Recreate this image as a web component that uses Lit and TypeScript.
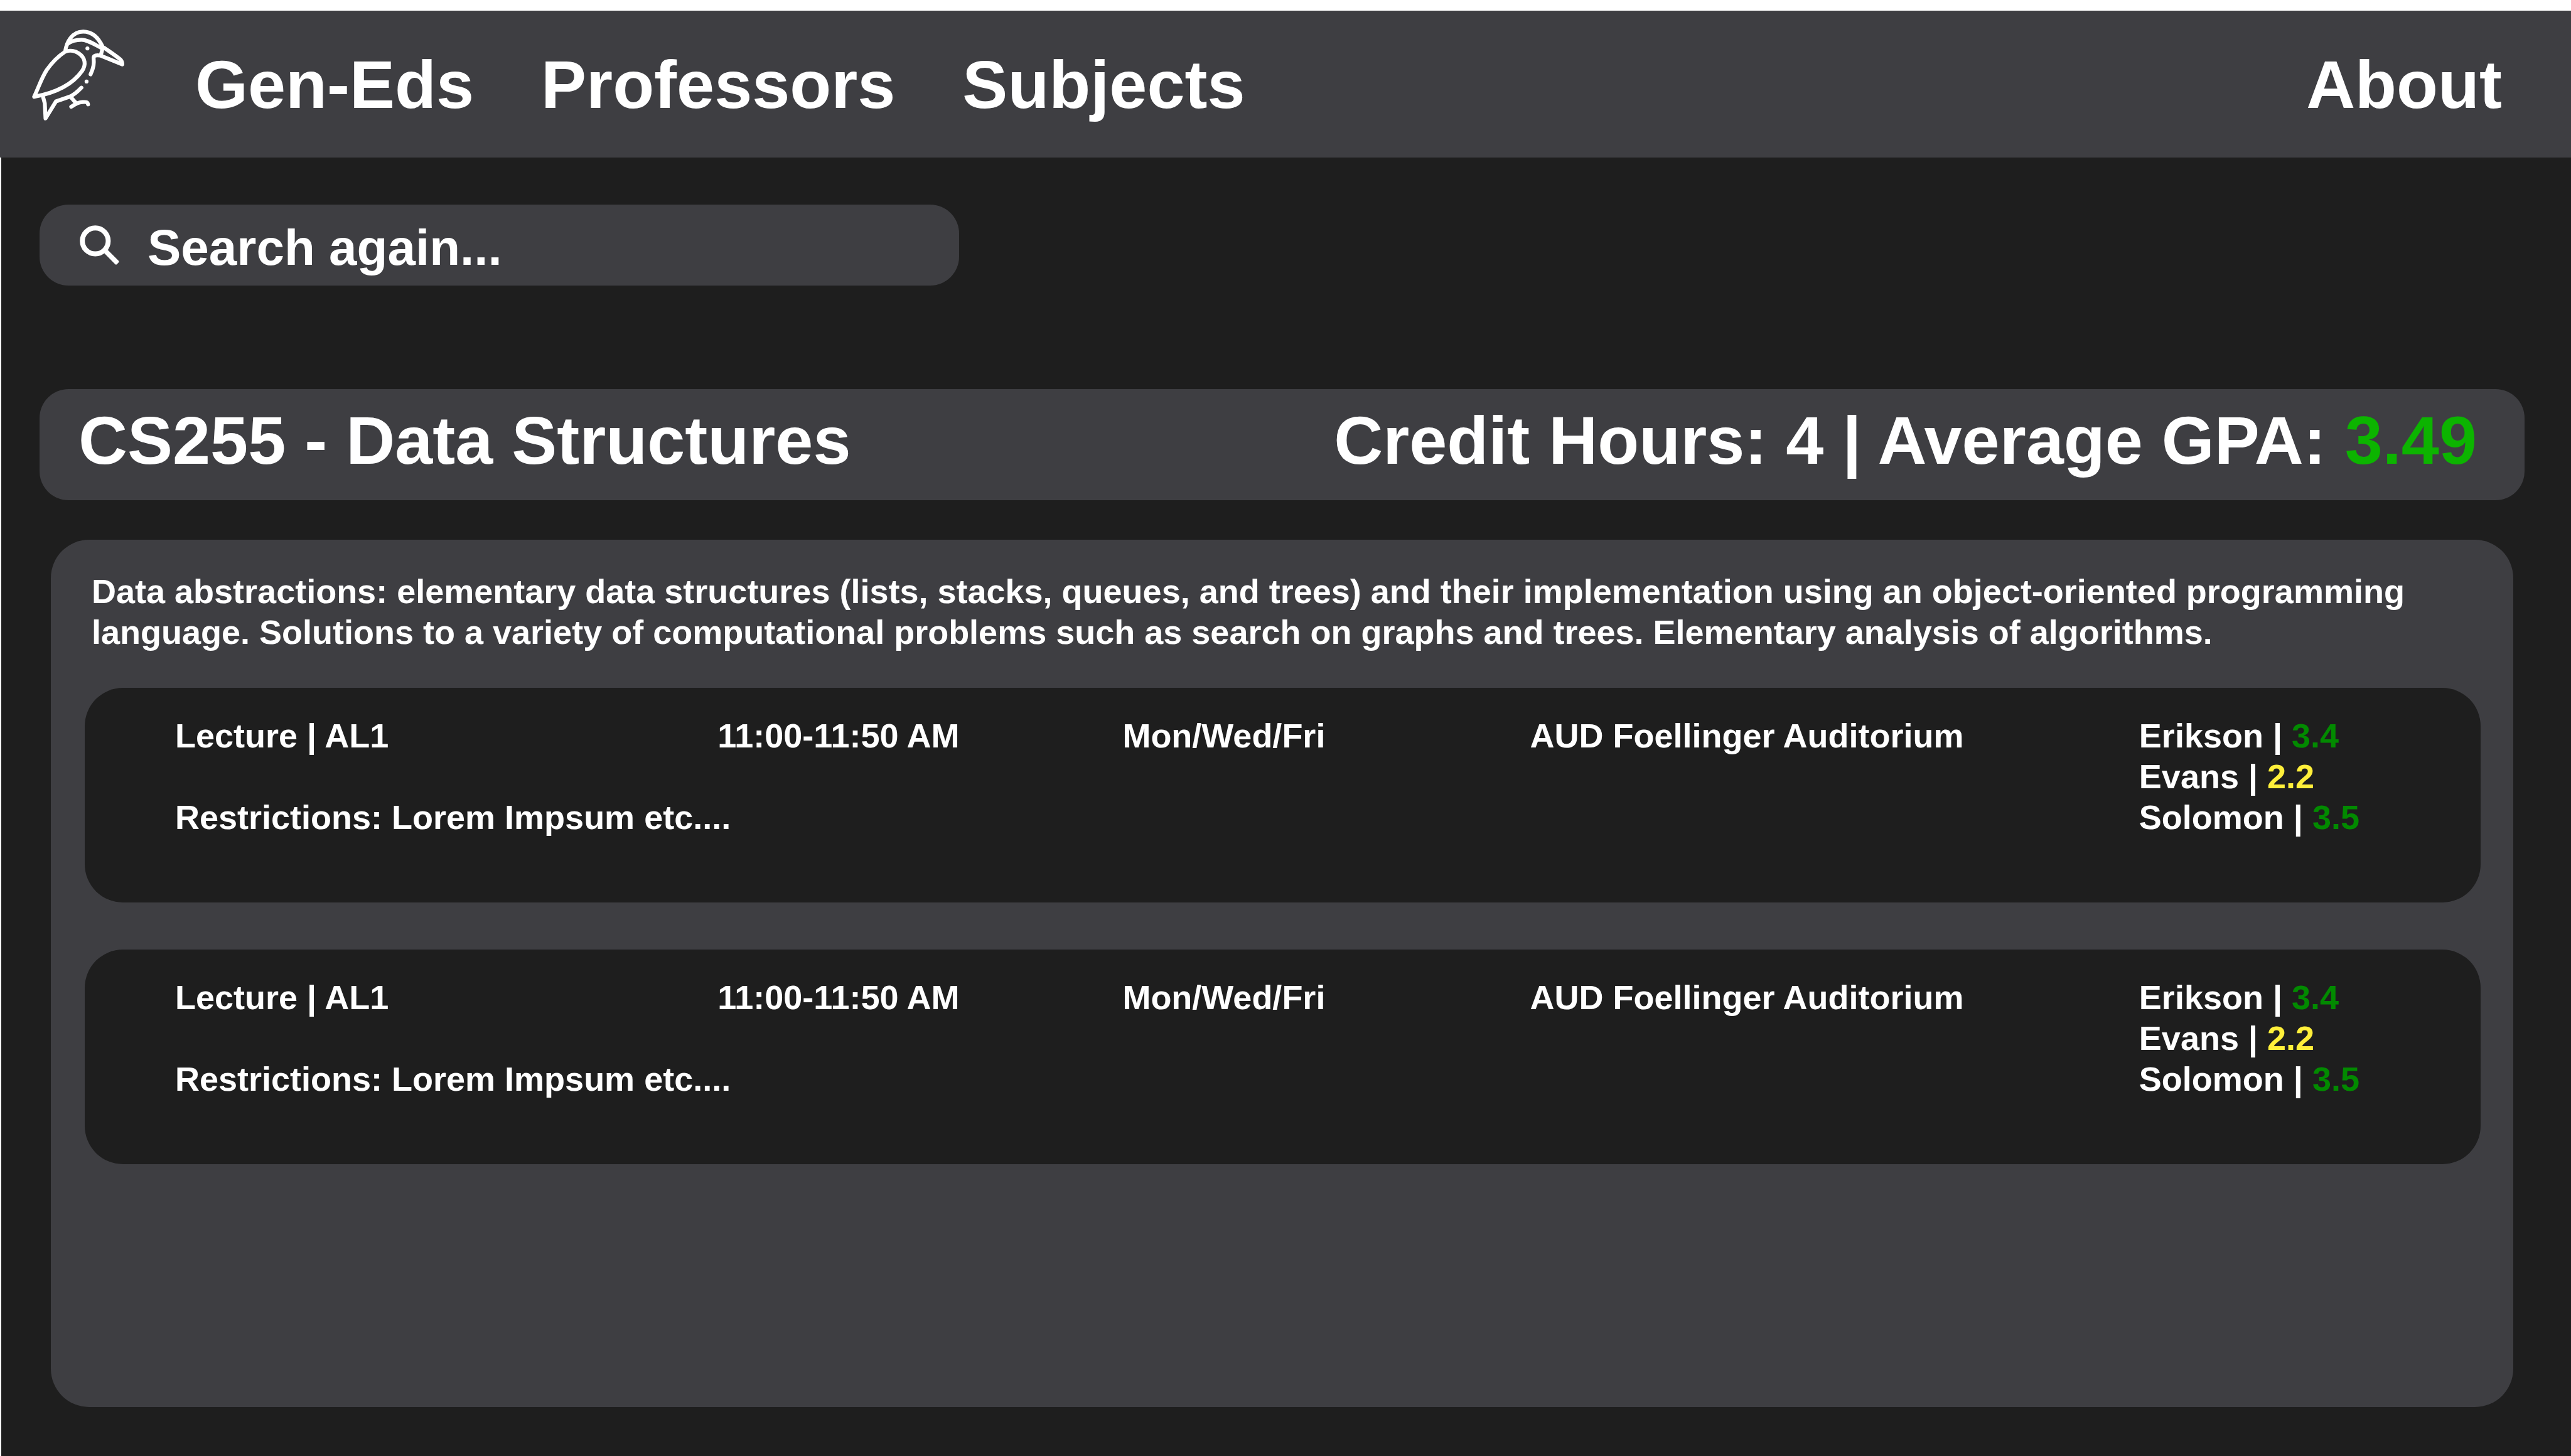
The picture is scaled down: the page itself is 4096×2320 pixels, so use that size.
import { LitElement, html, css, svg } from "lit";
import { customElement, property } from "lit/decorators.js";

type Rating = "high" | "mid";

interface Instructor {
  name: string;
  gpa: string;
  rating: Rating;
}

interface Section {
  kind: string;
  time: string;
  days: string;
  place: string;
  restrictions: string;
  instructors: Instructor[];
}

const lecture: Section = {
  kind: "Lecture | AL1",
  time: "11:00-11:50 AM",
  days: "Mon/Wed/Fri",
  place: "AUD Foellinger Auditorium",
  restrictions: "Restrictions: Lorem Impsum etc....",
  instructors: [
    { name: "Erikson", gpa: "3.4", rating: "high" },
    { name: "Evans", gpa: "2.2", rating: "mid" },
    { name: "Solomon", gpa: "3.5", rating: "high" },
  ],
};

const sections: Section[] = [lecture, lecture];

const birdIcon = svg`
  <g fill="none" stroke="currentColor" stroke-width="26" stroke-linecap="round" stroke-linejoin="round">
    <path d="M313 254C322 196 356 123 433 123C500 123 540 175 563 226"/>
    <path d="M327 205C352 185 390 177 422 177C462 177 510 210 558 234L572 230C612 258 655 286 682 310C690 318 693 326 693 341L546 282C520 277 503 283 502 296C506 335 503 362 482 407"/>
    <path d="M561 238L551 276"/>
    <path d="M313 256C345 244 380 252 404 268C448 298 453 345 425 385C355 485 240 532 106 557C140 485 155 432 190 378C230 322 270 284 313 256Z"/>
    <path d="M164 552L177 600L182 701L252 587L346 555C372 542 400 518 421 496"/>
    <path d="M350 559L384 597M353 623C382 605 397 594 428 592C452 590 462 592 465 607"/>
  </g>
  <circle cx="461" cy="235" r="13" fill="currentColor"/>
  <circle cx="455" cy="455" r="13" fill="currentColor"/>
`;

const searchIcon = svg`
  <circle cx="154" cy="166" r="86" fill="none" stroke="currentColor" stroke-width="33"/>
  <path
    d="M238 227L309 298Q314 303 309 309L298 321Q292 326 286 321L216 250L204 226Z"
    fill="currentColor"
  />
`;

@customElement("section-card")
export class SectionCard extends LitElement {
  @property({ attribute: false }) section!: Section;

  static styles = css`
    :host {
      display: block;
      background: #1e1e1e;
      border-radius: 61px;
      padding: 44px 0 103px 144px;
    }
    .grid {
      display: grid;
      grid-template-columns: 864fr 645fr 649fr 970fr 544fr;
      row-gap: 65px;
    }
    .restrictions {
      grid-column: 1 / 5;
    }
    .instructors {
      grid-column: 5;
      grid-row: 1 / 3;
      list-style: none;
      margin: 0;
      padding: 0;
    }
    .high {
      color: #028a00;
    }
    .mid {
      color: #ffef3a;
    }
  `;

  render() {
    const s = this.section;
    return html`
      <div class="grid">
        <span>${s.kind}</span>
        <span>${s.time}</span>
        <span>${s.days}</span>
        <span>${s.place}</span>
        <ul class="instructors">
          ${s.instructors.map(
            (i) => html`<li>${i.name} | <span class=${i.rating}>${i.gpa}</span></li>`
          )}
        </ul>
        <span class="restrictions">${s.restrictions}</span>
      </div>
    `;
  }
}

@customElement("app-root")
export class AppRoot extends LitElement {
  static styles = css`
    :host {
      display: flex;
      flex-direction: column;
      box-sizing: border-box;
      min-height: 100vh;
      background: #1e1e1e;
      color: #fff;
      font: bold 54px/65px "Liberation Sans", Arial, sans-serif;
    }
    .header {
      display: flex;
      align-items: flex-start;
      border-top: 17px solid #fff;
      padding: 4px 110px 29px 29px;
      background: #3e3e42;
      font-size: 108px;
      line-height: 124px;
    }
    .logo {
      flex: none;
      width: 201px;
      height: 201px;
      margin-right: 81px;
    }
    .logo svg {
      display: block;
      width: 100%;
      height: 100%;
    }
    .nav {
      display: flex;
      flex: 1;
      gap: 107px;
      padding-top: 52px;
    }
    a {
      color: inherit;
      text-decoration: none;
    }
    .about {
      margin-left: auto;
    }
    .main {
      flex: 1;
      display: flex;
      flex-direction: column;
      align-items: stretch;
      border-left: 2px solid #fff;
      padding: 75px 74px 78px 61px;
    }
    .search {
      display: flex;
      align-items: center;
      gap: 45px;
      box-sizing: border-box;
      width: 37%;
      height: 129px;
      padding: 0 64px;
      border-radius: 46px;
      background: #3e3e42;
    }
    .search svg {
      flex: none;
      width: 63px;
      height: 63px;
    }
    .search input {
      flex: 1;
      min-width: 0;
      height: 100%;
      border: 0;
      outline: 0;
      padding: 8px 0 0;
      background: none;
      color: inherit;
      font: inherit;
      font-size: 80px;
    }
    .search input::placeholder {
      color: #fff;
      opacity: 1;
    }
    .title {
      display: flex;
      justify-content: space-between;
      margin-top: 165px;
      padding: 20px 76px 33px 62px;
      border-radius: 46px;
      background: #3e3e42;
      font-size: 108px;
      line-height: 124px;
    }
    .title h1 {
      margin: 0;
      font: inherit;
    }
    .gpa {
      color: #0cb400;
    }
    .panel {
      flex: 1;
      margin: 63px 18px 0;
      padding: 50px 52px 50px 54px;
      border-radius: 61px;
      background: #3e3e42;
    }
    .description {
      margin: 0 110px 56px 11px;
    }
    .sections {
      display: grid;
      gap: 75px;
    }
  `;

  render() {
    return html`
      <header class="header">
        <a class="logo" href="#home" aria-label="Home">
          <svg viewBox="0 0 840 840" aria-hidden="true">${birdIcon}</svg>
        </a>
        <nav class="nav">
          <a href="#gen-eds">Gen-Eds</a>
          <a href="#professors">Professors</a>
          <a href="#subjects">Subjects</a>
          <a class="about" href="#about">About</a>
        </nav>
      </header>
      <main class="main">
        <label class="search">
          <svg viewBox="51 62 262 263" aria-hidden="true">${searchIcon}</svg>
          <input type="text" placeholder="Search again..." aria-label="Search again" />
        </label>
        <div class="title">
          <h1>CS255 - Data Structures</h1>
          <span>Credit Hours: 4 | Average GPA: <span class="gpa">3.49</span></span>
        </div>
        <div class="panel">
          <p class="description">
            Data abstractions: elementary data structures (lists, stacks, queues, and trees) and
            their implementation using an object-oriented programming language. Solutions to a
            variety of computational problems such as search on graphs and trees. Elementary
            analysis of algorithms.
          </p>
          <div class="sections">
            ${sections.map((s) => html`<section-card .section=${s}></section-card>`)}
          </div>
        </div>
      </main>
    `;
  }
}
